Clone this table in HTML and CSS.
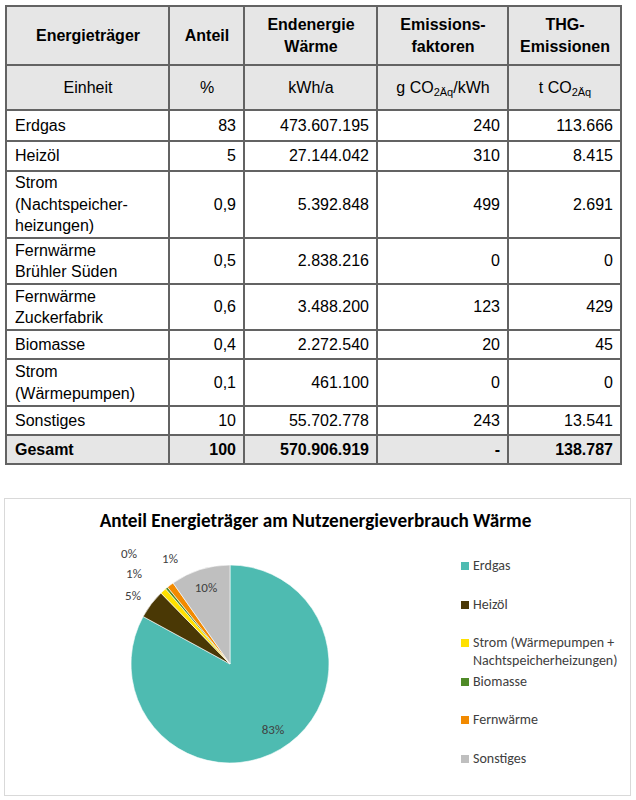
FILE: index.html
```html
<!DOCTYPE html>
<html lang="de">
<head>
<meta charset="utf-8">
<title>Energieträger Wärme</title>
<link rel="stylesheet" href="styles.css">
</head>
<body>
<table class="data">
  <colgroup>
    <col class="c1"><col class="c2"><col class="c3"><col class="c4"><col class="c5">
  </colgroup>
  <thead>
    <tr class="r-head">
      <th>Energieträger</th><th>Anteil</th><th>Endenergie<br>Wärme</th><th>Emissions-<br>faktoren</th><th>THG-<br>Emissionen</th>
    </tr>
    <tr class="r-unit">
      <td>Einheit</td><td>%</td><td>kWh/a</td><td>g CO<sub>2Äq</sub>/kWh</td><td>t CO<sub>2Äq</sub></td>
    </tr>
  </thead>
  <tbody>
    <tr class="r31"><td>Erdgas</td><td>83</td><td>473.607.195</td><td>240</td><td>113.666</td></tr>
    <tr class="r30"><td>Heizöl</td><td>5</td><td>27.144.042</td><td>310</td><td>8.415</td></tr>
    <tr class="r67"><td>Strom<br>(Nachtspeicher-<br>heizungen)</td><td>0,9</td><td>5.392.848</td><td>499</td><td>2.691</td></tr>
    <tr class="r46"><td>Fernwärme<br>Brühler Süden</td><td>0,5</td><td>2.838.216</td><td>0</td><td>0</td></tr>
    <tr class="r46"><td>Fernwärme<br>Zuckerfabrik</td><td>0,6</td><td>3.488.200</td><td>123</td><td>429</td></tr>
    <tr class="r29"><td>Biomasse</td><td>0,4</td><td>2.272.540</td><td>20</td><td>45</td></tr>
    <tr class="r47"><td>Strom<br>(Wärmepumpen)</td><td>0,1</td><td>461.100</td><td>0</td><td>0</td></tr>
    <tr class="r29"><td>Sonstiges</td><td>10</td><td>55.702.778</td><td>243</td><td>13.541</td></tr>
  </tbody>
  <tfoot>
    <tr class="r29 total"><td>Gesamt</td><td>100</td><td>570.906.919</td><td>-</td><td>138.787</td></tr>
  </tfoot>
</table>

<div class="chart">
  <div class="chart-title">Anteil Energieträger am Nutzenergieverbrauch Wärme</div>
  <div class="chart-body">
    <svg class="pie" width="440" height="250" viewBox="0 0 440 250">
      <g class="slices">
        <path class="s-erdgas" d="M225,125 L225,26 A99,99 0 1 1 138.14,77.51 Z"/>
        <path class="s-heizoel" d="M225,125 L138.14,77.51 A99,99 0 0 1 155.95,54.06 Z"/>
        <path class="s-strom" d="M225,125 L155.95,54.06 A99,99 0 0 1 160.65,49.76 Z"/>
        <path class="s-bio" d="M225,125 L160.65,49.76 A99,99 0 0 1 162.56,48.18 Z"/>
        <path class="s-fern" d="M225,125 L162.56,48.18 A99,99 0 0 1 168.07,44.01 Z"/>
        <path class="s-sonst" d="M225,125 L168.07,44.01 A99,99 0 0 1 225,26 Z"/>
      </g>
      <g class="labels">
        <text x="268" y="190">83%</text>
        <text x="201" y="48">10%</text>
        <text x="128" y="56">5%</text>
        <text x="129" y="34">1%</text>
        <text x="124" y="14">0%</text>
        <text x="165" y="19">1%</text>
      </g>
    </svg>
    <ul class="legend">
      <li><span class="key k-erdgas"></span><span>Erdgas</span></li>
      <li><span class="key k-heizoel"></span><span>Heizöl</span></li>
      <li><span class="key k-strom"></span><span>Strom (Wärmepumpen +<br>Nachtspeicherheizungen)</span></li>
      <li><span class="key k-bio"></span><span>Biomasse</span></li>
      <li><span class="key k-fern"></span><span>Fernwärme</span></li>
      <li><span class="key k-sonst"></span><span>Sonstiges</span></li>
    </ul>
  </div>
</div>
</body>
</html>
```

FILE: styles.css
```css
html, body {
  margin: 0;
  padding: 0;
  background: #ffffff;
}

body {
  width: 636px;
  height: 800px;
  overflow: hidden;
  font-family: "Liberation Sans", Arial, sans-serif;
  color: #000;
}

.data {
  border-collapse: collapse;
  margin: 5px 0 0 5px;
  font-family: "Liberation Sans", Arial, sans-serif;
  font-size: 16px;
  line-height: 21.5px;
  table-layout: fixed;
}

.c1 { width: 163px; }
.c2 { width: 75px; }
.c3 { width: 133px; }
.c4 { width: 131px; }
.c5 { width: 113px; }

.data th,
.data td {
  border: 2px solid #636363;
  padding: 0 7px 0 8px;
  vertical-align: middle;
  text-align: right;
}

.data tbody td:first-child,
.data tfoot td:first-child {
  text-align: left;
}

.data thead th,
.data thead td {
  background: #e6e6e6;
  text-align: center;
}

.data thead th {
  font-weight: bold;
}

.data sub {
  font-size: 11px;
  vertical-align: -3px;
  line-height: 0;
}

.r-head { height: 59px; }
.r-unit { height: 45px; }
.r31 { height: 31px; }
.r30 { height: 30px; }
.r29 { height: 29px; }
.r46 { height: 46px; }
.r47 { height: 47px; }
.r67 { height: 67px; }

.total td {
  background: #e6e6e6;
  font-weight: bold;
}

.chart {
  margin: 33px 0 0 4px;
  width: 625px;
  height: 296px;
  border: 1px solid #d9d9d9;
  font-family: Carlito, Lato, "Open Sans", sans-serif;
  color: #404040;
}

.chart-title {
  height: 40px;
  line-height: 44px;
  text-align: center;
  font-size: 19.2px;
  font-weight: bold;
  color: #000;
  padding-right: 4px;
  white-space: nowrap;
}

.chart-body {
  display: flex;
  align-items: flex-start;
}

.pie {
  display: block;
  flex: none;
}

.slices path {
  stroke: #ffffff;
  stroke-width: 0.6;
}

.s-erdgas { fill: #4ebbb1; }
.s-heizoel { fill: #4a3805; }
.s-strom { fill: #ffe100; }
.s-bio { fill: #4f8a27; }
.s-fern { fill: #f28a00; }
.s-sonst { fill: #bfbfbf; }

.labels text {
  font-family: Carlito, Lato, "Open Sans", sans-serif;
  font-size: 13px;
  fill: #404040;
  text-anchor: middle;
  dominant-baseline: central;
}

.legend {
  list-style: none;
  margin: 18px 0 0 16px;
  padding: 0;
  display: grid;
  grid-auto-rows: 38.5px;
  font-size: 14px;
  line-height: 18px;
  color: #404040;
}

.legend li {
  display: flex;
  align-items: flex-start;
  gap: 4px;
  white-space: nowrap;
}

.key {
  flex: none;
  width: 8px;
  height: 8px;
  margin-top: 5px;
}

.k-erdgas { background: #4ebbb1; }
.k-heizoel { background: #4a3805; }
.k-strom { background: #ffe100; }
.k-bio { background: #4f8a27; }
.k-fern { background: #f28a00; }
.k-sonst { background: #bfbfbf; }
```
